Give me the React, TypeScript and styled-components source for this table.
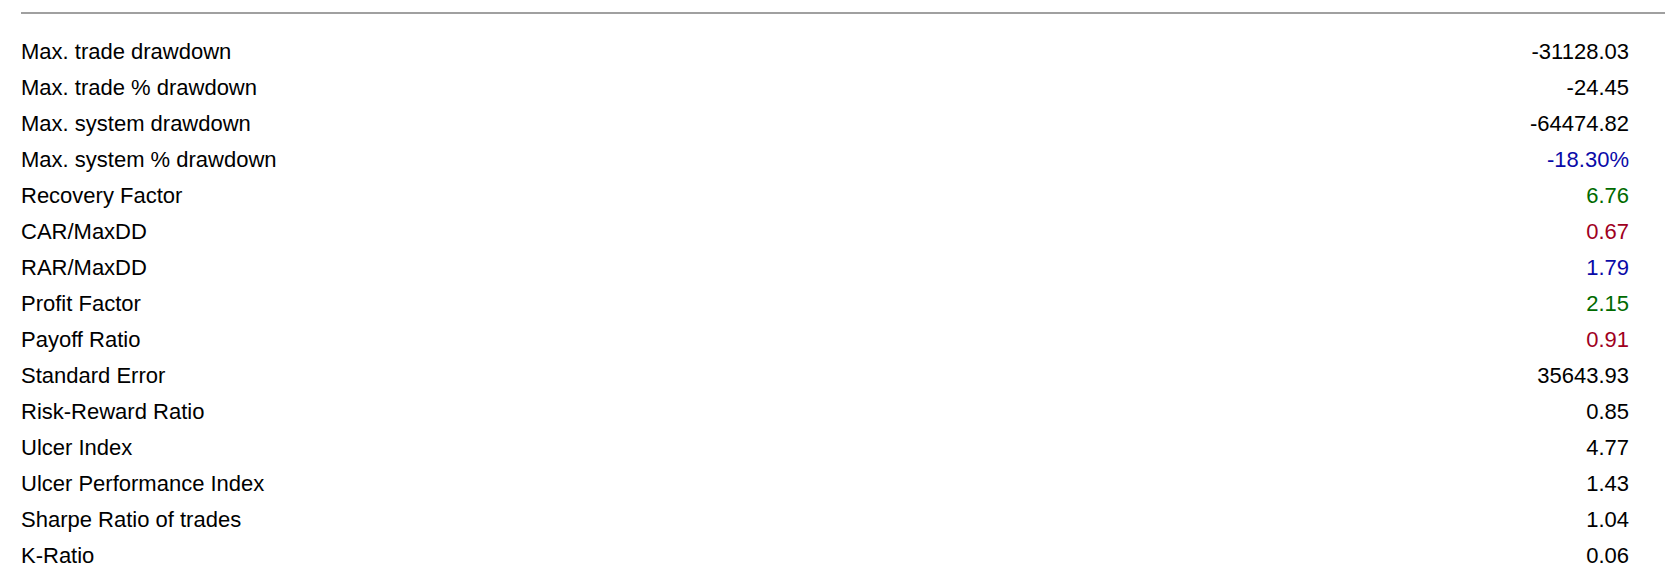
import React from 'react';
import styled, { createGlobalStyle } from 'styled-components';

const GlobalStyle = createGlobalStyle`
  html, body {
    margin: 0;
    padding: 0;
    background: #ffffff;
  }
`;

type Tone = 'plain' | 'blue' | 'green' | 'red';

const toneColors: Record<Tone, string> = {
  plain: '#000000',
  blue: '#0a0aa8',
  green: '#006a00',
  red: '#a0001e',
};

const ReportWrapper = styled.section`
  padding: 12px 0 0 21px;
  font-family: 'Liberation Sans', Arial, sans-serif;
  font-size: 22px;
  color: #000;
`;

const Divider = styled.div`
  height: 2px;
  background: #a0a0a0;
`;

const StatsList = styled.ul`
  list-style: none;
  margin: 0;
  padding: 20px 36px 0 0;
`;

const StatRow = styled.li`
  display: flex;
  justify-content: space-between;
  align-items: baseline;
  height: 36px;
  line-height: 36px;
  white-space: nowrap;
`;

const StatLabel = styled.span`
  color: #000;
`;

const StatValue = styled.span<{ $tone: Tone }>`
  color: ${({ $tone }) => toneColors[$tone]};
  text-align: right;
`;

const stats: { label: string; value: string; tone: Tone }[] = [
  { label: 'Max. trade drawdown', value: '-31128.03', tone: 'plain' },
  { label: 'Max. trade % drawdown', value: '-24.45', tone: 'plain' },
  { label: 'Max. system drawdown', value: '-64474.82', tone: 'plain' },
  { label: 'Max. system % drawdown', value: '-18.30%', tone: 'blue' },
  { label: 'Recovery Factor', value: '6.76', tone: 'green' },
  { label: 'CAR/MaxDD', value: '0.67', tone: 'red' },
  { label: 'RAR/MaxDD', value: '1.79', tone: 'blue' },
  { label: 'Profit Factor', value: '2.15', tone: 'green' },
  { label: 'Payoff Ratio', value: '0.91', tone: 'red' },
  { label: 'Standard Error', value: '35643.93', tone: 'plain' },
  { label: 'Risk-Reward Ratio', value: '0.85', tone: 'plain' },
  { label: 'Ulcer Index', value: '4.77', tone: 'plain' },
  { label: 'Ulcer Performance Index', value: '1.43', tone: 'plain' },
  { label: 'Sharpe Ratio of trades', value: '1.04', tone: 'plain' },
  { label: 'K-Ratio', value: '0.06', tone: 'plain' },
];

export const App = () => {
  return (
    <React.Fragment>
      <GlobalStyle />
      <ReportWrapper>
        <Divider />
        <StatsList>
          {stats.map((stat, index) => (
            <StatRow key={`stat_${index}`}>
              <StatLabel>{stat.label}</StatLabel>
              <StatValue $tone={stat.tone}>{stat.value}</StatValue>
            </StatRow>
          ))}
        </StatsList>
      </ReportWrapper>
    </React.Fragment>
  );
};

export default App;
